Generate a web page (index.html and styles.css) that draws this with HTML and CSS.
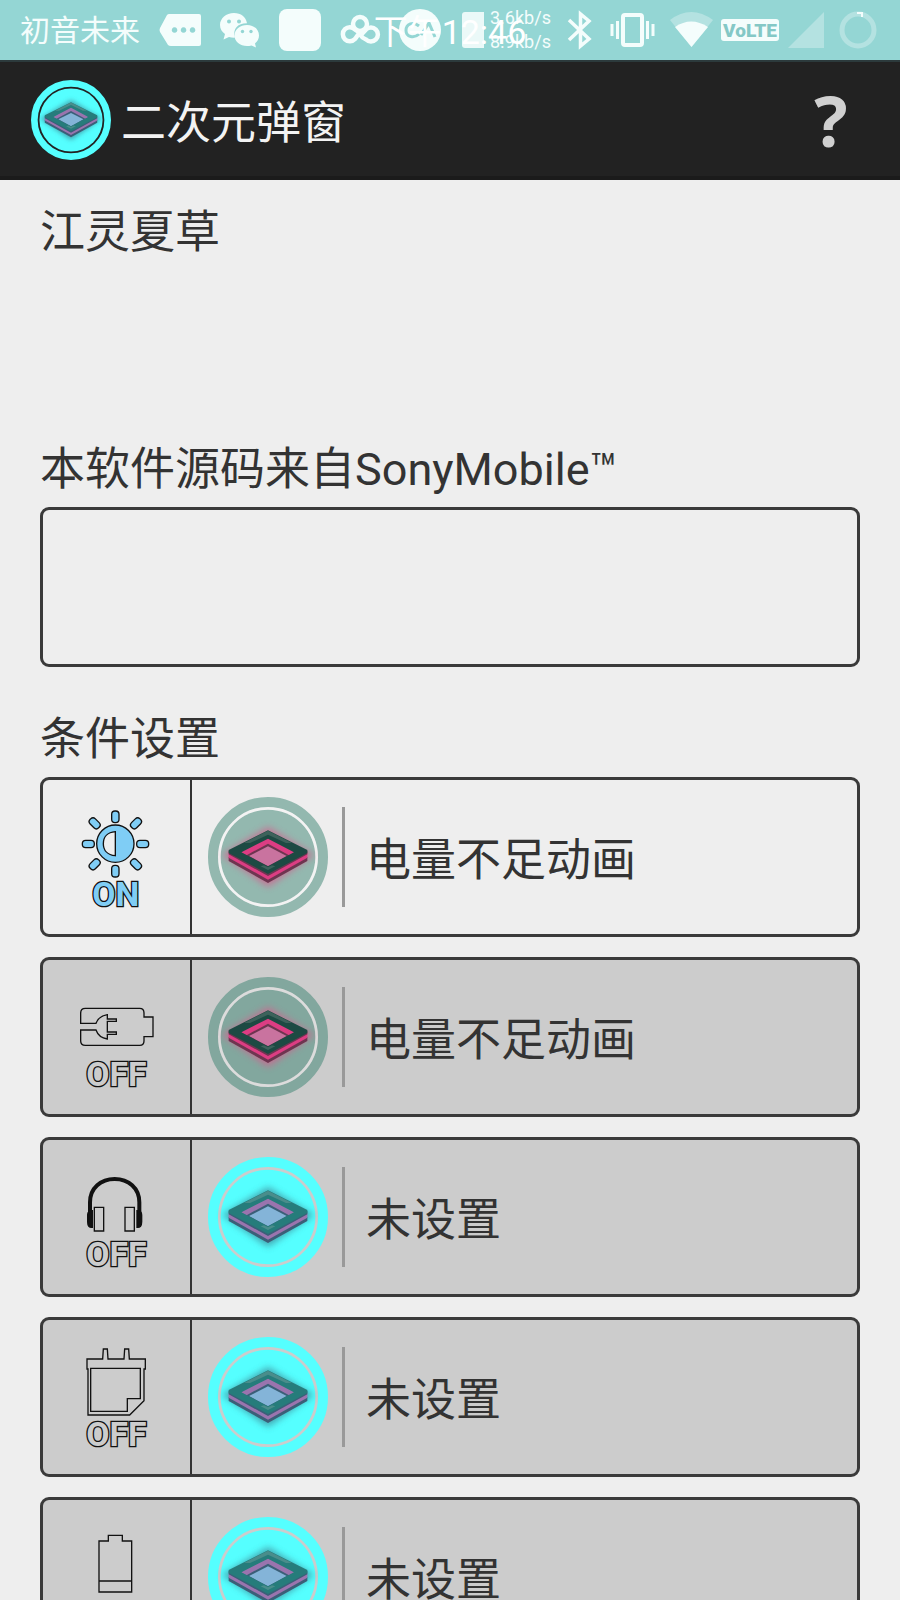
FILE: index.html
```html
<!DOCTYPE html>
<html lang="zh-CN">

<head>
    <meta charset="UTF-8">
    <meta name="viewport" content="width=device-width, initial-scale=1">
    <title>二次元弹窗</title>
    <link rel="stylesheet" href="styles.css">
</head>

<body>
    <svg class="defs" aria-hidden="true">
        <defs>
            <filter id="soft" x="-30%" y="-30%" width="160%" height="160%">
                <feGaussianBlur stdDeviation="11" />
            </filter>
            <symbol id="emblem" viewBox="532 82 360 360">
                <circle class="disc" cx="712" cy="262" r="165" fill="none" stroke-width="30" />
                <circle class="plate" cx="712" cy="262" r="142" />
                <circle class="gap" cx="712" cy="262" r="146" />
                <path class="halo" d="M574 256 712 172 850 256 712 352Z" filter="url(#soft)" />
                <path class="edge" d="M594 262V274L712 340 830 274V262Z" />
                <path class="side" d="M594 250V264L712 330 830 264V250Z" />
                <path class="edge" d="M594 244V254L712 319 830 254V244Z" />
                <path class="side" d="M630 248 712 204 792 248 712 292Z" />
                <path class="edge" d="M645 258 712 222 778 258 712 292Z" />
                <path class="hole" d="M655 259 712 230 768 259 712 290Z" />
                <path class="top" fill-rule="evenodd"
                    d="M594 241 712 182 830 241V250L712 313 594 250ZM632 248 712 290 790 248 712 207Z" />
                <path class="shine" d="M640 220 712 183 784 220 766 220 712 195 658 220Z" />
                <path class="shine" d="M690 290 712 301 734 290 724 287 712 293 700 287Z" />
            </symbol>
        </defs>
    </svg>

    <div class="status">
        <span class="carrier">初音未来</span>
        <div class="notices">
            <svg width="42" height="42" viewBox="0 0 42 42">
                <path fill="#f4fdfc" fill-rule="evenodd" d="M10 5H40Q42 5 42 7V35Q42 37 40 37H12Q10 37 9 36L1 23Q0 21 1 19L8 6Q9 5 10 5ZM15.500 18.200a2.800 2.800 0 1 0 .1 0ZM24.500 18.200a2.800 2.800 0 1 0 .1 0ZM33.500 18.200a2.800 2.800 0 1 0 .1 0Z" />
            </svg>
            <svg width="42" height="42" viewBox="0 0 42 42">
                <path fill="#f4fdfc" d="M15 4C7 4 1 9.500 1 16c0 4 2 7 5 9L4.500 30.500 10 28c2 .5 4 .7 6 .6C13 19 20 14 28 14.300 27 8 22 4 15 4Z" />
                <path fill="#f4fdfc" d="M28 16c-7 0-12.500 4.500-12.500 10.500S21 37 28 37c1.500 0 3-.2 4.500-.6L37 38.500 36 34.500c2.500-2 4-4.800 4-8C40 20.500 35 16 28 16Z" />
                <g fill="#94d6d4">
                    <circle cx="10" cy="12.500" r="2" /><circle cx="20" cy="12.500" r="2" />
                    <circle cx="23.500" cy="22.500" r="1.700" /><circle cx="32" cy="22.500" r="1.700" />
                </g>
            </svg>
            <svg width="42" height="42" viewBox="0 0 42 42">
                <rect width="42" height="42" rx="8" fill="#f4fdfc" />
            </svg>
            <svg width="42" height="42" viewBox="0 0 42 42">
                <g fill="none" stroke="#f4fdfc" stroke-width="4.500">
                    <circle cx="21" cy="15" r="7" />
                    <path d="M21 23 16 30A7 7 0 1 1 16 20.500Q19 22 21 25.500T27 30.500A7 7 0 1 0 27 20.500L21 27" />
                </g>
            </svg>
            <svg width="42" height="42" viewBox="0 0 42 42">
                <circle cx="21" cy="21" r="21" fill="#f4fdfc" />
                <path fill="none" stroke="#94d6d4" stroke-width="3" d="M20 17C14 12 7 15 7 21.500S15 30 20 25M22 26 30 14 36 28" />
            </svg>
            <svg width="25" height="42" viewBox="0 0 25 42">
                <path fill="#ebf9f8" d="M6 3H25V39H6Q3 39 3 36V6Q3 3 6 3Z" />
            </svg>
        </div>
        <div class="speed"><span>3.6kb/s</span><span>8.9kb/s</span></div>
        <div class="radios">
            <svg width="31" height="42" viewBox="0 0 31 42">
                <path fill="none" stroke="#f4fdfc" stroke-width="3.500" d="M5 11 25 30 16.500 37V5L25 12 5 31" />
            </svg>
            <svg width="45" height="42" viewBox="0 0 45 42">
                <rect x="13" y="6" width="19" height="30" rx="2" fill="none" stroke="#f4fdfc" stroke-width="4" />
                <path stroke="#f4fdfc" stroke-width="3" d="M2 15V27M7.500 12V30M37.500 12V30M43 15V27" />
            </svg>
            <div class="network">
                <svg width="43" height="42" viewBox="0 0 43 42">
                    <path fill="#b4e2e1" d="M0 11Q21 -5 43 11L21.500 38Z" />
                    <path fill="#f4fdfc" d="M5 18Q21 7 38 18L21.500 38Z" />
                </svg>
                <svg width="58" height="42" viewBox="0 0 58 42">
                    <rect y="10" width="58" height="22" rx="3" fill="#f4fdfc" />
                    <text class="volte" x="29" y="28" text-anchor="middle">VoLTE</text>
                </svg>
                <svg width="37" height="42" viewBox="0 0 37 42">
                    <path fill="#b4e2e1" d="M1 39H37V3Z" />
                </svg>
            </div>
            <svg width="38" height="42" viewBox="0 0 38 42">
                <circle cx="19" cy="21" r="16" fill="none" stroke="#b4e2e1" stroke-width="5" />
                <path fill="none" stroke="#f4fdfc" stroke-width="2" d="M18 4H23V8" />
            </svg>
        </div>
        <time class="clock">下午12:46</time>
    </div>

    <header class="bar">
        <svg class="emblem blue" width="80" height="80"><use href="#emblem" /></svg>
        <h1>二次元弹窗</h1>
        <button class="help" type="button">?</button>
    </header>

    <main>
        <section class="intro">
            <h2>江灵夏草</h2>
        </section>

        <section>
            <h2>本软件源码来自SonyMobile™</h2>
            <div class="box"></div>
        </section>

        <section>
            <h2>条件设置</h2>
            <ul class="list">
                <li class="box on">
                    <button class="toggle" type="button" aria-pressed="true">
                        <svg width="80" height="124" viewBox="136 76 240 372">
                            <g class="line">
                                <circle cx="257" cy="222" r="56" />
                                <path class="moon" d="M257 186C233 188 221 203 221 222S233 256 257 258Z" />
                                <rect x="246" y="124" width="22" height="35" rx="10" />
                                <rect x="246" y="287" width="22" height="35" rx="10" />
                                <rect x="158" y="212" width="36" height="22" rx="10" />
                                <rect x="321" y="212" width="36" height="22" rx="10" />
                                <rect x="177" y="150" width="36" height="22" rx="10" transform="rotate(45 195 161)" />
                                <rect x="301" y="150" width="36" height="22" rx="10" transform="rotate(-45 319 161)" />
                                <rect x="177" y="273" width="36" height="22" rx="10" transform="rotate(-45 195 284)" />
                                <rect x="301" y="273" width="36" height="22" rx="10" transform="rotate(45 319 284)" />
                                <text x="258" y="410" text-anchor="middle">ON</text>
                            </g>
                        </svg>
                    </button>
                    <button class="choice" type="button">
                        <svg class="emblem pink" width="120" height="120"><use href="#emblem" /></svg>
                        <span>电量不足动画</span>
                    </button>
                </li>
                <li class="box">
                    <button class="toggle" type="button" aria-pressed="false">
                        <svg width="80" height="124" viewBox="136 76 240 372">
                            <g class="line">
                                <path d="M153 221V190Q153 176 167 176H330Q343 176 343 190V202H370V261H343V274Q343 287 330 287H167Q153 287 153 274V241H199Q207 264 233 268V254H260V247H233V215H260V208H233V195Q207 199 199 221Z" />
                                <text x="260" y="410" text-anchor="middle">OFF</text>
                            </g>
                        </svg>
                    </button>
                    <button class="choice" type="button">
                        <svg class="emblem pink" width="120" height="120"><use href="#emblem" /></svg>
                        <span>电量不足动画</span>
                    </button>
                </li>
                <li class="box">
                    <button class="toggle" type="button" aria-pressed="false">
                        <svg width="80" height="124" viewBox="136 76 240 372">
                            <g class="line">
                                <path stroke-width="12" d="M181 262V218C181 175 214 148 255 148S329 175 329 218V262" />
                                <path class="solid" d="M188 243V293Q174 295 174 276V256Q174 243 188 243ZM322 243V293Q336 295 336 276V256Q336 243 322 243Z" />
                                <path d="M194 233H222V304H194ZM286 233H314V304H286Z" />
                                <text x="260" y="410" text-anchor="middle">OFF</text>
                            </g>
                        </svg>
                    </button>
                    <button class="choice" type="button">
                        <svg class="emblem blue" width="120" height="120"><use href="#emblem" /></svg>
                        <span>未设置</span>
                    </button>
                </li>
                <li class="box">
                    <button class="toggle" type="button" aria-pressed="false">
                        <svg width="80" height="124" viewBox="136 76 240 372">
                            <g class="line">
                                <path d="M172 178V148H219L221 118H233L235 148H283L285 118H297L299 148H347V178H343V273L300 316H175V178Z" />
                                <path d="M183 176H332V267H293V305H183Z" />
                                <text x="260" y="410" text-anchor="middle">OFF</text>
                            </g>
                        </svg>
                    </button>
                    <button class="choice" type="button">
                        <svg class="emblem blue" width="120" height="120"><use href="#emblem" /></svg>
                        <span>未设置</span>
                    </button>
                </li>
                <li class="box">
                    <button class="toggle" type="button" aria-pressed="false">
                        <svg width="80" height="124" viewBox="136 76 240 372">
                            <g class="line">
                                <path d="M208 307V154H236V137H278V154H306V307ZM208 274H306" />
                                <text x="260" y="410" text-anchor="middle">OFF</text>
                            </g>
                        </svg>
                    </button>
                    <button class="choice" type="button">
                        <svg class="emblem blue" width="120" height="120"><use href="#emblem" /></svg>
                        <span>未设置</span>
                    </button>
                </li>
            </ul>
        </section>
    </main>
</body>

</html>
```
FILE: styles.css
```css
* {
    box-sizing: border-box;
    margin: 0;
    padding: 0;
}

body {
    height: 100vh;
    display: flex;
    flex-direction: column;
    overflow: hidden;
    background: #eee;
    color: #333;
    font-family: Roboto, "Noto Sans CJK SC", sans-serif;
}

svg {
    display: block;
    flex: none;
}

button {
    border: 0;
    background: none;
    color: inherit;
    font: inherit;
}

.defs {
    position: absolute;
    width: 0;
    height: 0;
}

/* status bar */
.status {
    position: relative;
    flex: none;
    display: flex;
    align-items: center;
    height: 60px;
    padding: 0 23px 0 20px;
    background: #94d6d4;
    color: #f4fdfc;
}

.carrier {
    font-size: 30px;
    line-height: 40px;
    padding-top: 2px;
    white-space: nowrap;
}

.notices {
    display: flex;
    gap: 18px;
    margin-left: 19px;
}

.speed {
    display: flex;
    flex-direction: column;
    margin-left: 6px;
    font-size: 18px;
    line-height: 24px;
}

.radios {
    display: flex;
    gap: 15px;
    margin-left: auto;
}

.network {
    display: flex;
    gap: 8px;
}

.volte {
    fill: #84c8c6;
    font-size: 19px;
    font-weight: 900;
}

.clock {
    position: absolute;
    left: 0;
    right: 0;
    top: 0;
    padding-top: 2px;
    color: #fff;
    font-size: 34px;
    line-height: 60px;
    text-align: center;
}

/* title bar */
.bar {
    flex: none;
    display: flex;
    align-items: center;
    gap: 10px;
    height: 120px;
    padding: 2px 44px 0 31px;
    border-top: 2px solid #2c3a3c;
    border-bottom: 4px solid #1b1b1b;
    background: #222;
    color: #f3f3f3;
}

h1,
h2 {
    font-size: 45px;
    line-height: 60px;
    font-weight: 400;
}

h1 {
    font-family: "Noto Sans CJK SC", sans-serif;
}

h2 {
    padding-top: 3px;
}

.help {
    margin-left: auto;
    width: 50px;
    color: #d0d0d0;
    font-family: "Open Sans", sans-serif;
    font-size: 70px;
    line-height: 80px;
    font-weight: 700;
}

/* content */
main {
    flex: 1;
    display: flex;
    flex-direction: column;
    gap: 40px;
    padding: 20px 40px;
    overflow-y: auto;
    scrollbar-width: none;
}

.intro {
    min-height: 197px;
}

.box {
    display: flex;
    min-height: 160px;
    border: 3px solid #3a3a3a;
    border-radius: 9px;
}

section > .box,
.list {
    margin-top: 7px;
}

.list {
    display: flex;
    flex-direction: column;
    gap: 20px;
    list-style: none;
}

.list .box {
    --fill: #ccc;
    --icon: #ccc;
    background: var(--fill);
}

.list .on {
    --fill: #eee;
    --icon: #7fcdf5;
}

.toggle {
    width: 149px;
    display: flex;
    align-items: center;
    justify-content: center;
    padding-right: 4px;
    border-right: 2px solid #333;
}

.choice {
    flex: 1;
    display: flex;
    align-items: center;
    padding-left: 16px;
    font-family: "Noto Sans CJK SC", sans-serif;
    font-size: 45px;
    line-height: 60px;
    text-align: left;
}

.choice span {
    margin-left: 14px;
    padding: 20px 0 20px 21px;
    border-left: 3px solid #999;
}

.line {
    fill: var(--icon);
    stroke: #111;
    stroke-width: 4;
}

/* outline drawn under the letter so only its outer half shows */
.line text {
    stroke-width: 8;
    paint-order: stroke;
    font-size: 101px;
    font-weight: 700;
}

.moon {
    fill: var(--fill);
}

.solid {
    fill: #111;
}

/* emblem */
.blue {
    --disc: #5ff;
    --gap: #ffffff00;
    --halo: #3f8f9c;
    --edge: #3b5f78;
    --side: #9a74ae;
    --hole: #84b4d8;
    --top: #267c7b;
    --shine: #4a8d8b;
}

.pink {
    --disc: #38827080;
    --gap: #ffffff50;
    --halo: #d0628e;
    --edge: #6e3550;
    --side: #dc3d83;
    --hole: #c9739f;
    --top: #1d4a43;
    --shine: #3d625b;
}

.disc {
    stroke: var(--disc);
}

.plate {
    fill: var(--disc);
}

.gap {
    fill: none;
    stroke: var(--gap);
    stroke-width: 8;
}

.halo {
    fill: var(--halo);
    opacity: 0.8;
}

.edge {
    fill: var(--edge);
}

.side {
    fill: var(--side);
}

.hole {
    fill: var(--hole);
}

.top {
    fill: var(--top);
}

.shine {
    fill: var(--shine);
}
```
